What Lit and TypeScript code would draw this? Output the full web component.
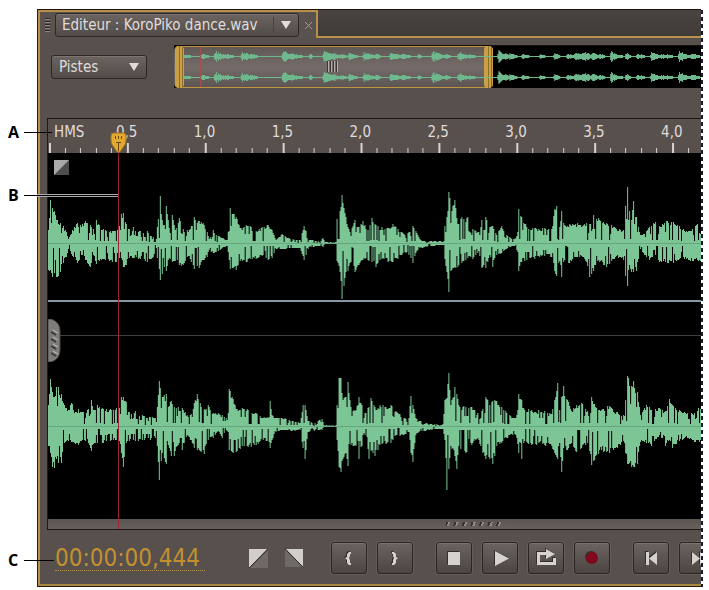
import { LitElement, html, css, svg } from "lit";
import { customElement } from "lit/decorators.js";

type Peak = [x: number, up: number, down: number];

const parse = (text: string): Peak[] =>
  text.trim().split(/\s+/).map((p) => p.split(",").map(Number) as Peak);

// Peak envelopes: position, height above the axis, depth below it.
const LEFT = parse(`48,12,25 50,41,25 52,33,31 54,30,28 57,22,31 60,19,27 63,16,18 66,10,12 68,4,5 72,12,11
77,19,18 82,18,10 85,21,15 90,17,22 93,13,10 96,22,19 99,17,16 105,12,15 112,11,17 118,13,17 121,28,13
123,29,22 126,18,20 129,13,13 133,15,13 140,11,14 147,11,17 153,6,12 156,4,4 157,15,13 160,45,34 162,22,29
164,17,22 166,35,26 169,14,13 172,27,17 175,12,16 179,24,20 183,13,20 187,12,12 190,13,14 194,25,24
199,21,23 203,19,15 207,10,12 209,4,6 213,12,9 218,7,7 222,5,4 227,3,2 228,10,8 230,33,24 233,28,23
236,25,25 240,14,16 246,17,17 250,16,14 256,11,14 262,15,11 268,17,15 272,12,13 276,3,5 282,9,5 290,4,4
300,3,4 304,16,15 306,11,10 309,3,3 318,2,2 323,5,3 325,1,0 336,1,0 337,23,16 340,30,27 342,46,52
344,33,40 346,25,27 348,15,26 350,10,18 355,22,27 358,15,20 363,21,15 368,12,15 372,24,17 376,17,22
382,15,14 388,14,17 393,18,17 398,13,14 405,8,8 409,10,10 413,16,18 416,11,9 420,4,4 425,2,3 440,2,1
444,2,1 445,16,14 447,25,27 449,49,46 452,30,25 455,41,22 458,18,22 462,25,18 468,25,13 473,13,14
479,10,7 482,22,23 486,25,23 490,15,10 493,16,22 497,8,10 502,16,9 507,8,5 512,4,2 515,4,2 518,10,8
519,32,26 522,25,17 527,15,15 535,14,14 545,14,11 552,13,12 555,32,26 557,35,30 560,15,16 562,30,31
565,17,15 570,18,18 576,18,12 585,18,14 590,18,31 594,27,26 600,22,17 607,19,22 615,15,14 620,13,12
624,12,15 626,35,30 628,53,40 630,30,20 632,22,27 634,40,27 637,25,26 641,8,5 645,9,10 650,15,15
656,20,10 660,16,17 668,21,18 674,20,18 680,16,14 687,11,14 693,13,16 698,18,15 702,17,18`);

const RIGHT = parse(`48,20,18 50,45,25 52,32,38 54,28,39 56,37,30 58,37,34 61,30,34 64,20,15 68,15,13 71,22,14
75,13,16 78,16,17 82,13,12 88,16,15 91,25,23 94,15,15 97,20,15 103,16,15 110,16,13 116,17,12 119,17,13
121,28,25 123,28,38 126,23,15 129,13,13 135,14,13 142,10,12 150,9,12 155,8,10 156,4,4 157,18,18
159,43,50 162,28,25 166,30,35 168,18,17 171,24,28 174,18,28 178,18,17 182,17,22 187,10,8 190,10,12
194,22,20 197,30,22 200,22,23 204,16,26 208,20,12 213,12,10 218,12,4 222,10,10 226,8,3 228,12,5
229,35,22 232,28,24 236,16,24 242,17,18 248,15,19 256,12,17 263,8,12 269,9,14 270,24,20 272,10,12
276,8,5 282,8,3 292,5,4 300,3,3 303,20,20 305,20,30 308,5,5 315,3,3 322,7,3 324,1,0 336,1,0 337,20,12
339,46,38 341,46,43 343,25,30 346,28,25 348,42,37 351,18,17 356,15,18 359,28,30 362,20,18 365,12,8
369,18,30 371,27,23 375,18,28 380,20,17 386,18,16 391,20,15 396,14,8 404,8,8 409,8,5 411,29,25
413,20,33 416,8,8 420,5,4 430,2,3 443,2,2 445,25,12 447,27,60 449,50,40 451,20,18 455,37,28 457,30,40
459,20,18 466,18,25 472,18,17 478,12,10 483,16,25 486,28,30 490,20,30 493,24,35 497,24,18 502,18,15
510,10,8 516,8,8 518,15,16 519,30,25 522,25,30 524,17,15 532,15,17 545,14,17 552,11,18 555,25,25
558,41,30 560,15,15 562,28,43 564,38,20 568,25,22 572,14,15 577,20,24 582,22,20 588,14,15 592,28,36
596,18,28 602,15,22 610,19,25 618,13,20 624,10,13 626,25,25 628,48,35 632,38,38 634,43,38 638,32,35
641,10,14 647,20,15 652,15,18 660,17,8 666,14,18 670,26,12 673,20,20 680,15,13 688,12,10 695,12,14
702,20,15`);

// Overview bursts: attack position and strength, each one decaying to the right.
const BURSTS = parse(`184,2,8 202,3,6 215,6,9 225,3,9 242,6,7 250,3,8 283,7,9 292,3,10 310,3,3 324,7,8
333,4,6 341,3,6 349,4,8 364,5,9 376,3,5 391,6,8 402,3,9 419,3,3 433,7,9 446,3,4 459,5,8 470,2,6 499,7,9
510,3,8 523,3,6 541,3,5 555,4,5 568,4,6 576,5,8 583,6,9 592,4,10 600,3,6 612,6,7 620,3,4 627,4,4
638,3,8 652,5,7 662,3,6 668,3,5 680,6,9 692,3,8`);

const noise = (n: number): number => {
  const v = Math.sin(n * 12.9898) * 43758.5453;
  return v - Math.floor(v);
};

function channelPath(peaks: Peak[], axis: number, seed: number): string {
  const bars: string[] = [];
  let i = 0;
  for (let x = 48; x < 702; x++) {
    while (i < peaks.length - 2 && peaks[i + 1][0] <= x) i++;
    const [x0, u0, d0] = peaks[i];
    const [x1, u1, d1] = peaks[i + 1];
    const t = (x - x0) / (x1 - x0);
    const exact = x === x0;
    const cut = (k: number): number => {
      if (exact) return 1.05;
      const n = noise(x * k + seed);
      if (n > 0.86) return 0.15;
      return n > 0.7 ? 0.55 : 0.85 + n * 0.35;
    };
    const up = Math.round((u0 + (u1 - u0) * t) * cut(1));
    const down = Math.round((d0 + (d1 - d0) * t) * cut(3));
    bars.push(`M${x - 48} ${axis - up}h1V${axis + down + 1}h-1z`);
  }
  return bars.join("");
}

function overviewPath(axis: number): string {
  const bars: string[] = [];
  for (let x = 184; x < 702; x++) {
    let level = 0;
    for (const [start, power, length] of BURSTS) {
      const age = x - start;
      if (age >= 0 && age < length * 1.4) level = Math.max(level, power * (1 - age / (length * 1.4)));
      if (age === -1) level = Math.max(level, power / 2);
    }
    const h = Math.round(level * (0.4 + noise(x) * 0.5));
    bars.push(`M${x - 174} ${axis - h}h1V${axis + h + 1}h-1z`);
  }
  return bars.join("");
}

const TICKS = Array.from({ length: 42 }, (_, i) => {
  const x = Math.round(1 + i * 15.6);
  return `M${x} ${i % 5 ? 29 : 24}h${i % 5 ? 1 : 2}V34h-${i % 5 ? 1 : 2}z`;
}).join("");

const icon = (body: unknown) =>
  html`<svg class="glyph" viewBox="0 0 36 32" aria-hidden="true">${body}</svg>`;

const GROUPS = [
  [
    { label: "Point d’entrée", body: svg`<path d="M20 10h-2l-2 2v3l-2 1 2 2v3l2 2h2v-2h-1v-3l-1-2 1-2v-2h1z"/>` },
    { label: "Point de sortie", body: svg`<path d="M15 10h2l2 2v3l2 1-2 2v3l-2 2h-2v-2h1v-3l1-2-1-2v-2h-1z"/>` },
  ],
  [
    { label: "Arrêter", body: svg`<path d="M12 10h12v13H12z"/>` },
    { label: "Lire", body: svg`<path d="M13 9l14 7.500-14 7.500z"/>` },
    {
      label: "Lire en boucle",
      body: svg`<path d="M9 10h9V7l9 5-9 5v-4h-6v7h13v-4h3v7H9z"/>`,
    },
    { label: "Enregistrer", body: svg`<circle class="rec" cx="18" cy="16" r="6"/>` },
  ],
  [
    { label: "Début", body: svg`<path d="M13 10h3v13h-3zM24 10v13l-8-6.500z"/>` },
    { label: "Avance rapide", body: svg`<path d="M13 10l8 6.500-8 6.500zM21 10l8 6.500-8 6.500z"/>` },
  ],
];

@customElement("app-root")
export class AppRoot extends LitElement {
  static styles = css`
    :host {
      display: block;
      background: #fff;
      font-family: "DejaVu Sans Condensed", "DejaVu Sans", sans-serif;
      font-stretch: condensed;
      font-size: 15px;
      color: #e0dcda;
    }
    * {
      box-sizing: border-box;
    }
    button {
      font: inherit;
      color: inherit;
      padding: 0;
      cursor: pointer;
    }
    svg {
      display: block;
    }
    .figure {
      position: relative;
      padding: 9px 8px 4px 37px;
    }
    .editor {
      background: #57504d;
      border-left: 1px solid #2a1d10;
      border-bottom: 1px solid #2a1d10;
      overflow: hidden;
    }
    .frame {
      border-left: 2px solid #b98f4c;
      border-bottom: 2px solid #a8893f;
    }
    .cutline {
      position: absolute;
      top: 10px;
      bottom: 4px;
      right: 6px;
      width: 2px;
      background: repeating-linear-gradient(#1b1b2a 0 4px, #fff 4px 7px);
    }

    .tabs {
      display: flex;
      height: 29px;
      border-top: 1px solid #1c120c;
      margin-left: -2px;
    }
    .tab {
      display: flex;
      align-items: center;
      width: 280px;
      padding-left: 5px;
      border: solid #b98f4c;
      border-width: 2px 2px 0;
      background: #59524f;
    }
    .rest {
      flex: 1;
      background: linear-gradient(#494341, #403a38);
      border-bottom: 2px solid #b98f4c;
    }
    .grip {
      width: 5px;
      height: 15px;
      margin-right: 5px;
      background: repeating-linear-gradient(#2e2826 0 1px, #8d8784 1px 2px, transparent 2px 3px);
    }
    .drop {
      display: flex;
      align-items: center;
      justify-content: space-between;
      border: 1px solid #2c2725;
      border-radius: 3px;
      background: linear-gradient(#6b6461, #524c49);
      box-shadow: inset 0 1px #7c7572;
      height: 24px;
      text-align: left;
    }
    .title {
      width: 244px;
      padding-left: 6px;
      white-space: nowrap;
    }
    .arrow {
      display: flex;
      align-items: center;
      justify-content: center;
      width: 25px;
      height: 16px;
    }
    .title .arrow {
      border-left: 1px solid #48413f;
    }
    .close {
      border: 0;
      background: none;
      margin-left: 6px;
      width: 7px;
      height: 7px;
    }
    .close path {
      stroke: #aaa3a0;
      fill: none;
    }
    .arrow path {
      fill: #e0dcda;
    }

    .top {
      display: flex;
      align-items: flex-start;
      padding: 7px 0 0 11px;
      height: 80px;
    }
    .tracks {
      margin-top: 10px;
      width: 96px;
      padding: 0 0 0 7px;
    }
    .overview {
      position: relative;
      flex: 1;
      margin-left: 27px;
      height: 43px;
      border-top: 1px solid #150f0b;
      background: #000;
    }
    .overview svg {
      width: 100%;
      height: 42px;
      position: relative;
    }
    .overview path {
      fill: #6fb78c;
    }
    .selection {
      position: absolute;
      left: 0;
      top: 0;
      width: 60.6%;
      height: 42px;
      border: 1px solid #c0953f;
      border-width: 1px 0;
      border-radius: 5px;
      background: linear-gradient(#5f5855, #756c6a 50%, #5c5552);
    }
    .bound {
      position: absolute;
      top: -1px;
      bottom: -1px;
      width: 9px;
      border-radius: 4px;
      background: linear-gradient(90deg, #c9a047 0 4px, #8f6d29 4px 5px, #cba144 5px 7px, #8f6d29 7px 8px, #c9a047 8px);
    }
    .from {
      left: 1px;
    }
    .to {
      right: 0;
    }
    .hold {
      position: absolute;
      left: 153px;
      top: 15px;
      width: 12px;
      height: 11px;
      background: repeating-linear-gradient(90deg, #3d3735 0 1px, #b5afac 1px 2px, transparent 2px 3px);
    }
    .mark {
      position: absolute;
      left: 4.9%;
      top: 1px;
      width: 1px;
      height: 40px;
      background: #a2504b;
    }

    .timeline {
      position: relative;
      margin-left: 7px;
      border: 1px solid #1d1816;
      border-right: 0;
    }
    .ruler {
      height: 34px;
      background: #57504d;
    }
    .labels {
      display: grid;
      grid-template-columns: 62fr repeat(7, 78fr) 40fr;
      padding: 4px 0 0 6px;
      height: 24px;
      line-height: 19px;
      white-space: nowrap;
    }
    .scale {
      width: 100%;
      height: 34px;
      margin-top: -24px;
      fill: #d8d3cf;
    }
    .waves {
      width: 100%;
      height: 366px;
      background: #000;
    }
    .wave {
      fill: #7cc696;
    }
    .axis {
      fill: #68a57f;
    }
    .divider {
      fill: #8696a3;
    }
    .guide {
      fill: #3f403f;
    }
    .scroll {
      display: flex;
      align-items: center;
      justify-content: center;
      padding-left: 198px;
      height: 10px;
      background: linear-gradient(#5a5451, #67605d);
    }
    .dots {
      width: 56px;
      height: 4px;
      background: repeating-linear-gradient(110deg, #37312f 0 2px, #8f8986 2px 4px, transparent 4px 8px);
    }
    .playhead {
      position: absolute;
      left: 10.7%;
      top: 34px;
      bottom: 0;
      width: 1px;
      background: #9c2434;
    }
    .thumb {
      position: absolute;
      left: -8px;
      top: -21px;
      width: 17px;
      height: 21px;
    }
    .fade {
      border: 0;
      background: none;
      width: 20px;
      height: 19px;
    }
    .curve {
      position: absolute;
      left: 6px;
      top: 41px;
      width: 15px;
      height: 15px;
    }
    .expander {
      position: absolute;
      left: 0;
      top: 200px;
      width: 13px;
      height: 43px;
    }

    .bar {
      display: flex;
      align-items: center;
      height: 54px;
      padding: 2px 0 0 15px;
      white-space: nowrap;
    }
    .time {
      width: 150px;
      flex: none;
      font-size: 24px;
      line-height: 24px;
      height: 26px;
      color: #c3902f;
      border: 0;
      border-bottom: 1px dotted #b59044;
      background: none;
      padding: 0;
      font-family: inherit;
      font-stretch: inherit;
    }
    .fades {
      display: flex;
      gap: 15px;
      margin-left: 44px;
      width: 82px;
      flex: none;
    }
    .group {
      display: flex;
      flex: none;
      gap: 10px;
      margin-right: 23px;
    }
    .group button {
      width: 36px;
      height: 32px;
      border: 1px solid #2a2523;
      border-radius: 3px;
      background: linear-gradient(#6a6360, #4c4643);
      box-shadow: inset 0 1px #7a7370, 0 0 0 1px #635c59;
      flex: none;
    }
    .glyph {
      width: 36px;
      height: 32px;
      margin: -1px;
      fill: #d6d2cf;
      filter: drop-shadow(-1px -1px #332d2b);
    }
    .rec {
      fill: #82081f;
    }

    .callout {
      position: absolute;
      left: 8px;
      display: flex;
      align-items: center;
      height: 18px;
      color: #000;
      font: bold 16px/18px "Open Sans", sans-serif;
    }
    .callout i {
      height: 3px;
      margin-left: 4px;
      border: solid transparent;
      border-width: 1px 0;
      background: #000 content-box;
    }
    .callout span {
      width: 12px;
    }
    .a {
      top: 123px;
    }
    .b {
      top: 186px;
    }
    .c {
      top: 551px;
    }
    .a i {
      width: 28px;
    }
    .b i {
      width: 94px;
      border-image: linear-gradient(90deg, #fff 14px, #aaa 14px) 1;
    }
    .c i {
      width: 30px;
    }
  `;

  private arrow() {
    return html`<span class="arrow"
      ><svg width="10" height="8" viewBox="0 0 10 8"><path d="M0 0h10L5 8z" /></svg
    ></span>`;
  }

  render() {
    const labels = ["HMS", "0,5", "1,0", "1,5", "2,0", "2,5", "3,0", "3,5", "4,0"];
    return html`
      <main class="figure">
        <section class="editor">
          <div class="frame">
            <div class="tabs">
              <div class="tab">
                <span class="grip"></span>
                <button class="drop title">Editeur : KoroPiko dance.wav ${this.arrow()}</button>
                <button class="close" aria-label="Fermer">
                  <svg width="7" height="7" viewBox="0 0 8 8"><path d="M0 0l8 8M8 0L0 8" /></svg>
                </button>
              </div>
              <div class="rest"></div>
            </div>
            <div class="top">
              <button class="drop tracks">Pistes ${this.arrow()}</button>
              <div class="overview">
                <div class="selection">
                  <span class="bound from"></span><span class="bound to"></span>
                </div>
                <svg viewBox="0 0 528 42" preserveAspectRatio="none">
                  <path d=${overviewPath(10) + overviewPath(31)} />
                </svg>
                <span class="hold"></span><span class="mark"></span>
              </div>
            </div>
            <div class="timeline">
              <div class="ruler">
                <div class="labels">${labels.map((l) => html`<span>${l}</span>`)}</div>
                <svg class="scale" viewBox="0 0 654 34" preserveAspectRatio="none"><path d=${TICKS} /></svg>
              </div>
              <svg class="waves" viewBox="0 0 654 366" preserveAspectRatio="none">
                <path class="wave" d=${channelPath(LEFT, 90, 1)} />
                <path class="wave" d=${channelPath(RIGHT, 273, 5)} />
                <path class="axis" d="M0 90h654v1H0zM0 273h654v1H0z" />
                <path class="divider" d="M0 147h654v2H0z" />
                <path class="guide" d="M0 182h654v1H0z" />
              </svg>
              <div class="scroll"><span class="dots"></span></div>
              <div class="playhead">
                <svg class="thumb" viewBox="0 0 17 21">
                  <path
                    d="M3 1h11q2 0 2 3v5q0 3-2 5l-4 6H7l-4-6q-2-2-2-5V4q0-3 2-3z"
                    fill="#e3a92f"
                    stroke="#9a701c"
                  />
                  <path d="M5.500 4v3M8.500 4v3M11.500 4v3M6 10.500h5M8.500 11v8" stroke="#6b4a12" fill="none" />
                </svg>
              </div>
              <svg class="curve" viewBox="0 0 15 15">
                <path d="M0 0h15v15H0z" fill="#4e4e4e" />
                <path d="M0 0h15L0 15z" fill="#a9a9a9" />
              </svg>
              <svg class="expander" viewBox="0 0 13 43">
                <path d="M0 0h3q9 3 9 12v19q0 9-9 12H0z" fill="#7e7c7a" stroke="#4c4a49" />
                <path d="M5 11l5 3M5 18l5 3M5 25l5 3M5 32l5 3" stroke="#c4c0bd" />
                <path d="M3 13l5 3M3 20l5 3M3 27l5 3M3 34l5 3" stroke="#3d3b3a" stroke-width="2" />
              </svg>
            </div>
            <div class="bar">
              <input class="time" aria-label="Position" value="00:00:00,444" />
              <div class="fades">
                <button class="fade" aria-label="Fondu entrant">
                  <svg width="20" height="19" viewBox="0 0 20 19">
                    <path d="M19 1v18H1z" fill="#6f6967" />
                    <path d="M0 0h18L0 19z" fill="#d2cecb" />
                    <path d="M19 0L0 19" stroke="#332d2b" />
                  </svg>
                </button>
                <button class="fade" aria-label="Fondu sortant">
                  <svg width="20" height="19" viewBox="0 0 20 19">
                    <path d="M1 0v18h17z" fill="#6f6967" />
                    <path d="M2 0h17v18z" fill="#d2cecb" />
                    <path d="M1 0l18 18" stroke="#332d2b" />
                  </svg>
                </button>
              </div>
              ${GROUPS.map(
                (g) => html`<div class="group">
                  ${g.map((b) => html`<button aria-label=${b.label}>${icon(b.body)}</button>`)}
                </div>`,
              )}
            </div>
          </div>
        </section>
        <span class="cutline"></span>
        <div class="callout a"><span>A</span><i></i></div>
        <div class="callout b"><span>B</span><i></i></div>
        <div class="callout c"><span>C</span><i></i></div>
      </main>
    `;
  }
}
